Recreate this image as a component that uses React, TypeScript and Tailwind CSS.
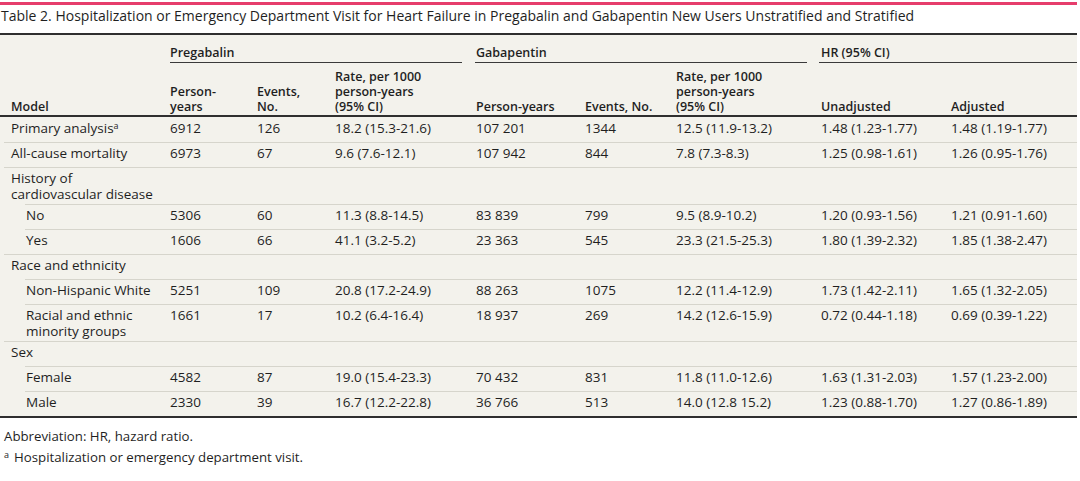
const ROW = "grid grid-cols-[166px_87px_78px_141px_109px_91px_145px_130px_126px]";
const SUB = "grid grid-cols-[145px_87px_78px_141px_109px_91px_145px_130px_126px]";

type Row = {
  label: React.ReactNode;
  sub?: boolean;
  double?: boolean;
  values?: string[];
};

const rows: Row[] = [
  {
    label: (
      <>
        Primary analysis<sup className="text-[9px] leading-none">a</sup>
      </>
    ),
    values: ["6912", "126", "18.2 (15.3-21.6)", "107 201", "1344", "12.5 (11.9-13.2)", "1.48 (1.23-1.77)", "1.48 (1.19-1.77)"],
  },
  {
    label: "All-cause mortality",
    values: ["6973", "67", "9.6 (7.6-12.1)", "107 942", "844", "7.8 (7.3-8.3)", "1.25 (0.98-1.61)", "1.26 (0.95-1.76)"],
  },
  {
    label: (
      <>
        History of
        <br />
        cardiovascular disease
      </>
    ),
    double: true,
  },
  {
    label: "No",
    sub: true,
    values: ["5306", "60", "11.3 (8.8-14.5)", "83 839", "799", "9.5 (8.9-10.2)", "1.20 (0.93-1.56)", "1.21 (0.91-1.60)"],
  },
  {
    label: "Yes",
    sub: true,
    values: ["1606", "66", "41.1 (3.2-5.2)", "23 363", "545", "23.3 (21.5-25.3)", "1.80 (1.39-2.32)", "1.85 (1.38-2.47)"],
  },
  { label: "Race and ethnicity" },
  {
    label: "Non-Hispanic White",
    sub: true,
    values: ["5251", "109", "20.8 (17.2-24.9)", "88 263", "1075", "12.2 (11.4-12.9)", "1.73 (1.42-2.11)", "1.65 (1.32-2.05)"],
  },
  {
    label: (
      <>
        Racial and ethnic
        <br />
        minority groups
      </>
    ),
    sub: true,
    double: true,
    values: ["1661", "17", "10.2 (6.4-16.4)", "18 937", "269", "14.2 (12.6-15.9)", "0.72 (0.44-1.18)", "0.69 (0.39-1.22)"],
  },
  { label: "Sex" },
  {
    label: "Female",
    sub: true,
    values: ["4582", "87", "19.0 (15.4-23.3)", "70 432", "831", "11.8 (11.0-12.6)", "1.63 (1.31-2.03)", "1.57 (1.23-2.00)"],
  },
  {
    label: "Male",
    sub: true,
    values: ["2330", "39", "16.7 (12.2-22.8)", "36 766", "513", "14.0 (12.8 15.2)", "1.23 (0.88-1.70)", "1.27 (0.86-1.89)"],
  },
];

function BodyRow({ row, first }: { row: Row; first: boolean }) {
  const cells = row.values ?? ["", "", "", "", "", "", "", ""];
  return (
    <div
      className={[
        row.sub ? SUB + " ml-[25px]" : ROW + " ml-[4px]",
        first ? "pt-[4px]" : "border-t border-[#d6d5cc]",
        row.double ? "pt-[2px] pb-[2px] leading-[16px]" : "pt-[3px] pb-[6px]",
      ].join(" ")}
    >
      <div className={row.sub ? "pl-[1px]" : "pl-[7px]"}>{row.label}</div>
      {cells.map((v, i) => (
        <div key={i} className="whitespace-nowrap">
          {v}
        </div>
      ))}
    </div>
  );
}

export default function App() {
  return (
    <div
      className="w-[1080px] bg-white text-[#1f1f1f]"
      style={{ fontFamily: '"Open Sans", "Noto Sans", sans-serif' }}
    >
      <div className="w-[1077px]">
        {/* pink rule */}
        <div className="pt-[2px]">
          <div className="h-[3px] bg-[#e63d6c]" />
        </div>

        {/* caption */}
        <div className="pl-[1px] pt-[1px] pb-[7px] text-[14px] leading-[20px]">
          Table 2. Hospitalization or Emergency Department Visit for Heart Failure in Pregabalin and Gabapentin New
          Users Unstratified and Stratified
        </div>

        {/* table */}
        <div className="border-t-2 border-b-2 border-[#2f2f2f] bg-[#f3f2ec]">
          {/* header */}
          <div className="border-b-2 border-[#2f2f2f] text-[12.5px] font-semibold leading-[15px]">
            <div className="grid grid-cols-[170px_306px_345px_256px] pt-[10px]">
              <div />
              <div className="mr-[14px] border-b border-[#3a3a3a] pb-[2px]">Pregabalin</div>
              <div className="mr-[14px] -ml-[1px] pl-[1px] border-b border-[#3a3a3a] pb-[2px]">Gabapentin</div>
              <div className="-ml-[2px] pl-[2px] border-b border-[#3a3a3a] pb-[2px]">HR (95% CI)</div>
            </div>
            <div className={ROW + " ml-[4px] items-end h-[52px] pb-[1px]"}>
              <div className="pl-[7px]">Model</div>
              <div>
                Person-
                <br />
                years
              </div>
              <div>
                Events,
                <br />
                No.
              </div>
              <div>
                Rate, per 1000
                <br />
                person-years
                <br />
                (95% CI)
              </div>
              <div>Person-years</div>
              <div>Events, No.</div>
              <div>
                Rate, per 1000
                <br />
                person-years
                <br />
                (95% CI)
              </div>
              <div>Unadjusted</div>
              <div>Adjusted</div>
            </div>
          </div>

          {/* body */}
          <div className="text-[13.5px] leading-[15px]">
            {rows.map((r, i) => (
              <BodyRow key={i} row={r} first={i === 0} />
            ))}
          </div>
        </div>

        {/* footnotes */}
        <div className="pl-[4px] pt-[8px] text-[13.25px] leading-[20px]">
          <div>Abbreviation: HR, hazard ratio.</div>
          <div className="mt-[1px] flex">
            <sup className="w-[10px] text-[9px] leading-none pt-[7px]">a</sup>
            <span>Hospitalization or emergency department visit.</span>
          </div>
        </div>
      </div>
    </div>
  );
}
